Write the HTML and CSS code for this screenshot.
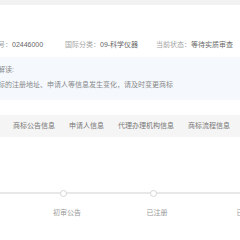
FILE: index.html
```html
<!DOCTYPE html>
<html lang="zh-CN">
<head>
  <meta charset="UTF-8">
  <meta name="viewport" content="width=device-width, initial-scale=1.0">
  <title>商标详情</title>
  <link rel="stylesheet" href="styles.css">
</head>
<body>

  <div class="topbar"></div>

  <!-- Basic info -->
  <div class="info">
    <div class="info-row">
      <div class="field"><span class="label">注册号：</span><span class="value">02446000</span></div>
      <div class="field"><span class="label">国际分类：</span><span class="value">09-科学仪器</span></div>
      <div class="field"><span class="label">当前状态：</span><span class="value">等待实质审查</span></div>
    </div>
  </div>

  <!-- Notice -->
  <div class="notice">
    <p class="notice-line">商标解读:</p>
    <p class="notice-line">如商标的注册地址、申请人等信息发生变化，请及时变更商标</p>
  </div>

  <!-- Tabs -->
  <nav class="tabs">
    <span class="tab">商标公告信息</span>
    <span class="tab">申请人信息</span>
    <span class="tab">代理办理机构信息</span>
    <span class="tab">商标流程信息</span>
  </nav>

  <!-- Process timeline -->
  <div class="timeline">
    <div class="track">
      <span class="dot"></span>
      <span class="dot"></span>
      <span class="dot"></span>
    </div>
    <div class="step-labels">
      <span class="step-label">初审公告</span>
      <span class="step-label">已注册</span>
      <span class="step-label">已续展</span>
    </div>
  </div>

</body>
</html>
```

FILE: styles.css
```css
html, body {
  overflow: hidden;
}

body {
  margin: 0;
  padding: 0;
  width: 240px;
  height: 240px;
  background-color: #fff;
  font-family: 'Liberation Sans', 'Noto Sans CJK SC', sans-serif;
  font-size: 7px;
  color: #777;
}

.topbar {
  height: 5px;
  background-color: #f2f2f2;
}

/* Basic info row */
.info {
  padding: 35px 0 7px;
}

.info-row {
  display: grid;
  grid-template-columns: 81px 91px auto;
  margin-left: -16px;
  line-height: 10px;
  white-space: nowrap;
}

.label {
  color: #a3a3a3;
}

.value {
  color: #666;
}

/* Notice */
.notice {
  background-color: #f5f9fe;
  padding: 5px 0 8px;
}

.notice-line {
  margin: 0 0 0 -16px;
  line-height: 15px;
  white-space: nowrap;
  color: #888;
}

/* Tabs */
.tabs {
  display: flex;
  gap: 14px;
  margin-top: 15px;
  padding-left: 13px;
  background-color: #f5f5f5;
  line-height: 22px;
  white-space: nowrap;
}

.tab {
  color: #777;
}

/* Timeline */
.timeline {
  margin-top: 52px;
}

.track {
  display: flex;
  align-items: center;
  gap: 83px;
  height: 8px;
  padding-left: 60px;
  background: linear-gradient(#e8e8e8, #e8e8e8) no-repeat center / 100% 2px;
}

.dot {
  flex: none;
  width: 7px;
  height: 7px;
  box-sizing: border-box;
  border: 1.5px solid #d6d6d6;
  border-radius: 50%;
  background-color: #fff;
}

.step-labels {
  display: flex;
  margin-top: 11px;
  padding-left: 22px;
  line-height: 10px;
  white-space: nowrap;
}

.step-label {
  flex: none;
  width: 90px;
  text-align: center;
  color: #999;
}
```
